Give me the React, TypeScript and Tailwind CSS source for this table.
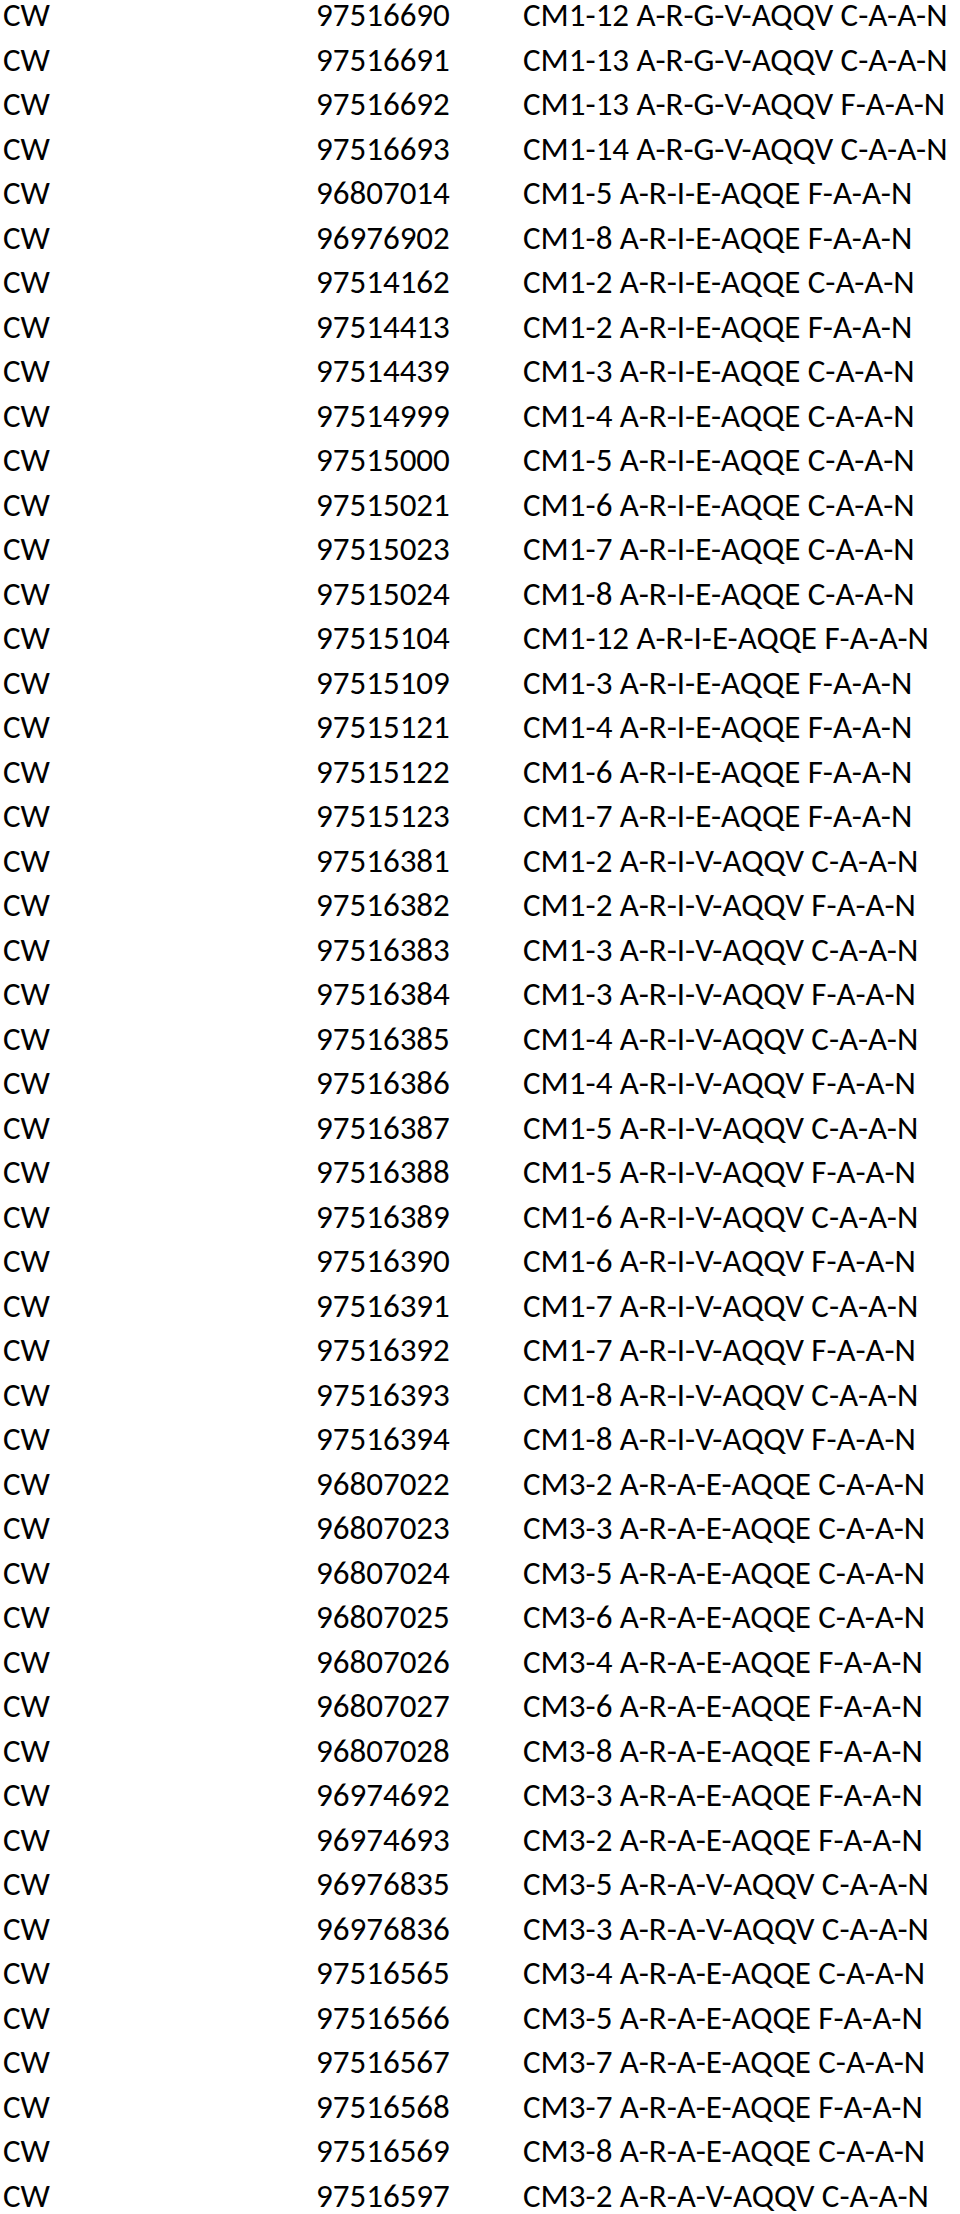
import React from "react";

const rows: [string, string][] = [
  ["97516690", "CM1-12 A-R-G-V-AQQV C-A-A-N"],
  ["97516691", "CM1-13 A-R-G-V-AQQV C-A-A-N"],
  ["97516692", "CM1-13 A-R-G-V-AQQV F-A-A-N"],
  ["97516693", "CM1-14 A-R-G-V-AQQV C-A-A-N"],
  ["96807014", "CM1-5 A-R-I-E-AQQE F-A-A-N"],
  ["96976902", "CM1-8 A-R-I-E-AQQE F-A-A-N"],
  ["97514162", "CM1-2 A-R-I-E-AQQE C-A-A-N"],
  ["97514413", "CM1-2 A-R-I-E-AQQE F-A-A-N"],
  ["97514439", "CM1-3 A-R-I-E-AQQE C-A-A-N"],
  ["97514999", "CM1-4 A-R-I-E-AQQE C-A-A-N"],
  ["97515000", "CM1-5 A-R-I-E-AQQE C-A-A-N"],
  ["97515021", "CM1-6 A-R-I-E-AQQE C-A-A-N"],
  ["97515023", "CM1-7 A-R-I-E-AQQE C-A-A-N"],
  ["97515024", "CM1-8 A-R-I-E-AQQE C-A-A-N"],
  ["97515104", "CM1-12 A-R-I-E-AQQE F-A-A-N"],
  ["97515109", "CM1-3 A-R-I-E-AQQE F-A-A-N"],
  ["97515121", "CM1-4 A-R-I-E-AQQE F-A-A-N"],
  ["97515122", "CM1-6 A-R-I-E-AQQE F-A-A-N"],
  ["97515123", "CM1-7 A-R-I-E-AQQE F-A-A-N"],
  ["97516381", "CM1-2 A-R-I-V-AQQV C-A-A-N"],
  ["97516382", "CM1-2 A-R-I-V-AQQV F-A-A-N"],
  ["97516383", "CM1-3 A-R-I-V-AQQV C-A-A-N"],
  ["97516384", "CM1-3 A-R-I-V-AQQV F-A-A-N"],
  ["97516385", "CM1-4 A-R-I-V-AQQV C-A-A-N"],
  ["97516386", "CM1-4 A-R-I-V-AQQV F-A-A-N"],
  ["97516387", "CM1-5 A-R-I-V-AQQV C-A-A-N"],
  ["97516388", "CM1-5 A-R-I-V-AQQV F-A-A-N"],
  ["97516389", "CM1-6 A-R-I-V-AQQV C-A-A-N"],
  ["97516390", "CM1-6 A-R-I-V-AQQV F-A-A-N"],
  ["97516391", "CM1-7 A-R-I-V-AQQV C-A-A-N"],
  ["97516392", "CM1-7 A-R-I-V-AQQV F-A-A-N"],
  ["97516393", "CM1-8 A-R-I-V-AQQV C-A-A-N"],
  ["97516394", "CM1-8 A-R-I-V-AQQV F-A-A-N"],
  ["96807022", "CM3-2 A-R-A-E-AQQE C-A-A-N"],
  ["96807023", "CM3-3 A-R-A-E-AQQE C-A-A-N"],
  ["96807024", "CM3-5 A-R-A-E-AQQE C-A-A-N"],
  ["96807025", "CM3-6 A-R-A-E-AQQE C-A-A-N"],
  ["96807026", "CM3-4 A-R-A-E-AQQE F-A-A-N"],
  ["96807027", "CM3-6 A-R-A-E-AQQE F-A-A-N"],
  ["96807028", "CM3-8 A-R-A-E-AQQE F-A-A-N"],
  ["96974692", "CM3-3 A-R-A-E-AQQE F-A-A-N"],
  ["96974693", "CM3-2 A-R-A-E-AQQE F-A-A-N"],
  ["96976835", "CM3-5 A-R-A-V-AQQV C-A-A-N"],
  ["96976836", "CM3-3 A-R-A-V-AQQV C-A-A-N"],
  ["97516565", "CM3-4 A-R-A-E-AQQE C-A-A-N"],
  ["97516566", "CM3-5 A-R-A-E-AQQE F-A-A-N"],
  ["97516567", "CM3-7 A-R-A-E-AQQE C-A-A-N"],
  ["97516568", "CM3-7 A-R-A-E-AQQE F-A-A-N"],
  ["97516569", "CM3-8 A-R-A-E-AQQE C-A-A-N"],
  ["97516597", "CM3-2 A-R-A-V-AQQV C-A-A-N"],
];

export default function App() {
  return (
    <div className="w-[960px] h-[2214px] overflow-hidden bg-white text-black">
      <div className="pl-[3px] grid grid-cols-[313px_207px_1fr] gap-y-[13px] text-[33px] leading-[31.5px] font-['Carlito','Lato',sans-serif] whitespace-nowrap">
        {rows.map(([num, desc], i) => (
          <React.Fragment key={i}>
            <div className="h-[31.5px]">CW</div>
            <div className="h-[31.5px]">{num}</div>
            <div className="h-[31.5px]">{desc}</div>
          </React.Fragment>
        ))}
      </div>
    </div>
  );
}
